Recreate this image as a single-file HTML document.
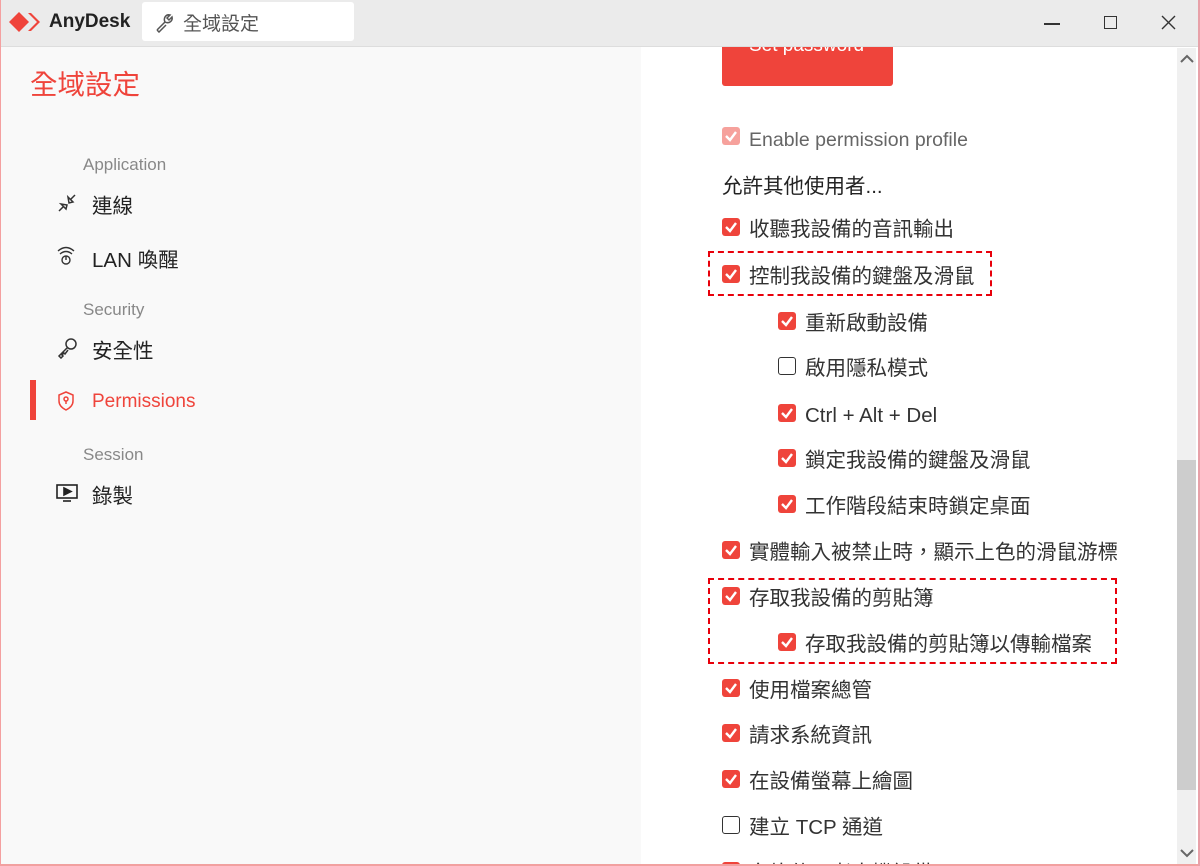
<!DOCTYPE html>
<html style="overflow:hidden"><head><meta charset="utf-8"><style>
*{margin:0;padding:0;box-sizing:border-box}
html,body{width:1200px;height:866px;overflow:hidden}
body{background:#fff;font-family:"Liberation Sans","Noto Sans CJK TC",sans-serif;color:#222}
#w{position:relative;width:1200px;height:866px;overflow:hidden}
.a{position:absolute;white-space:nowrap}
.tb{left:0;top:0;width:1200px;height:47px;background:#ebebeb;border-bottom:1px solid #ddd}
.left{left:0;top:47px;width:641px;height:819px;background:#f9f9f9}
.cb{position:absolute;width:18px;height:18px;border-radius:3px;background:#ef443b}
.cb svg{position:absolute;left:2px;top:3px}
.cbe{position:absolute;width:18px;height:18px;border-radius:3px;border:1.6px solid #333;background:#fff}
.t{font-size:20.5px;color:#333;line-height:24px}
.nav{font-size:20.5px;color:#222}
.sec{font-size:17px;color:#888}
</style></head><body><div id="w">
<div class="a tb"></div>
<svg class="a" style="left:9px;top:11px" width="36" height="22" viewBox="0 0 36 22"><path d="M0 11 L10 1 L20 11 L10 21Z" fill="#ef443b"/><path d="M19 2 L28 11 L19 20 L22 20 L31 11 L22 2Z" fill="#ef443b"/></svg>
<div class="a" style="left:49px;top:11px;font-size:19px;font-weight:bold;color:#222">AnyDesk</div>
<div class="a" style="left:142px;top:2px;width:212px;height:39px;background:#fff;border-radius:3px"></div>
<svg class="a" style="left:154px;top:11px" width="22" height="22" viewBox="0 0 22 22"><path d="M3 19 L11 11 M11 11 C9 7 12 3 16 4 L13 7 L15 9 L18 6 C19 10 15 13 11 11 M3 19 L5 21 L12 14" fill="none" stroke="#555" stroke-width="1.5"/></svg>
<div class="a" style="left:183px;top:9px;font-size:19px;color:#555">全域設定</div>
<div class="a" style="left:1044px;top:23px;width:16px;height:1.5px;background:#333"></div>
<div class="a" style="left:1104px;top:16px;width:13px;height:13px;border:1.5px solid #333"></div>
<svg class="a" style="left:1161px;top:15px" width="15" height="15"><path d="M1 1L14 14M14 1L1 14" stroke="#333" stroke-width="1.4"/></svg>
<div class="a left"></div>
<div class="a" style="left:30px;top:62px;font-size:27.5px;color:#ef443b">全域設定</div>
<div class="a sec" style="left:83px;top:155px">Application</div>
<svg class="a" style="left:57px;top:193px" width="20" height="20" viewBox="0 0 20 20" fill="none" stroke="#333" stroke-width="1.5"><path d="M2 18L7 13M13 7L18 2M4 11L9 16L10 12ZM11 4L16 9L12 10Z"/></svg>
<div class="a nav" style="left:92px;top:189px">連線</div>
<svg class="a" style="left:56px;top:245px" width="20" height="20" viewBox="0 0 20 20" fill="none" stroke="#333" stroke-width="1.4"><path d="M2 6Q10 -1 18 6M4 9Q10 4 16 9"/><circle cx="10" cy="15" r="4"/><path d="M10 11V15"/></svg>
<div class="a nav" style="left:92px;top:243px">LAN 喚醒</div>
<div class="a sec" style="left:83px;top:300px">Security</div>
<svg class="a" style="left:56px;top:337px" width="22" height="22" viewBox="0 0 22 22" fill="none" stroke="#333" stroke-width="1.5"><circle cx="15" cy="7" r="5"/><path d="M11 11L3 19L5 21L7 19L6 18L8 16L9 17L12 13"/></svg>
<div class="a nav" style="left:92px;top:334px">安全性</div>
<div class="a" style="left:30px;top:380px;width:6px;height:40px;background:#ef443b"></div>
<svg class="a" style="left:57px;top:391px" width="18" height="20" viewBox="0 0 18 20" fill="none" stroke="#ef443b" stroke-width="1.5"><path d="M9 1L16 4V10C16 14 13 17 9 19C5 17 2 14 2 10V4Z"/><circle cx="9" cy="8" r="2"/><path d="M9 10V13"/></svg>
<div class="a" style="left:92px;top:391px;font-size:19px;color:#ef443b">Permissions</div>
<div class="a sec" style="left:83px;top:445px">Session</div>
<svg class="a" style="left:56px;top:483px" width="22" height="20" viewBox="0 0 22 20" fill="none" stroke="#222" stroke-width="1.6"><rect x="1" y="2" width="20" height="13"/><path d="M8 5L15 8.5L8 12Z" fill="#222"/><path d="M7 18H15"/></svg>
<div class="a nav" style="left:92px;top:479px">錄製</div>

<div class="a" style="left:722px;top:47px;width:171px;height:39px;background:#ef443b;border-radius:0 0 3px 3px;overflow:hidden"><div style="position:absolute;left:27px;top:-12px;font-size:19px;color:#fff">Set password</div></div>
<div class="a" style="left:1177px;top:48px;width:19px;height:816px;background:#f0f0f0"></div>
<div class="a" style="left:1177px;top:460px;width:19px;height:330px;background:#cdcdcd"></div>
<svg class="a" style="left:1180px;top:54px" width="14" height="10"><path d="M1 8L7 2L13 8" fill="none" stroke="#666" stroke-width="2"/></svg>
<svg class="a" style="left:1180px;top:848px" width="14" height="10"><path d="M1 2L7 8L13 2" fill="none" stroke="#666" stroke-width="2"/></svg>

<div class="cb" style="left:722px;top:127px;background:#f6a19c"><svg width="14" height="12"><path d="M2 6L6 10L12 2" fill="none" stroke="#fff" stroke-width="2.4"/></svg></div>
<div class="a t" style="left:749px;top:128px;color:#666;font-size:19.5px">Enable permission profile</div>
<div class="a t" style="left:722px;top:175px;color:#222">允許其他使用者...</div>

<div id="list"></div>
<script>
var items=[[722,228,1,"收聽我設備的音訊輸出"],[722,275,1,"控制我設備的鍵盤及滑鼠"],[778,322,1,"重新啟動設備"],[778,367,0,"啟用隱私模式"],[778,414,1,"Ctrl + Alt + Del"],[778,459,1,"鎖定我設備的鍵盤及滑鼠"],[778,505,1,"工作階段結束時鎖定桌面"],[722,551,1,"實體輸入被禁止時，顯示上色的滑鼠游標"],[722,597,1,"存取我設備的剪貼簿"],[778,643,1,"存取我設備的剪貼簿以傳輸檔案"],[722,689,1,"使用檔案總管"],[722,734,1,"請求系統資訊"],[722,780,1,"在設備螢幕上繪圖"],[722,826,0,"建立 TCP 通道"],[722,872,1,"允許使用者本機設備"]];
var h="";items.forEach(function(i){var y=i[1];h+=i[2]?'<div class="cb" style="left:'+i[0]+'px;top:'+(y-10)+'px"><svg width="14" height="12"><path d="M2 6L6 10L12 2" fill="none" stroke="#fff" stroke-width="2.4"/></svg></div>':'<div class="cbe" style="left:'+i[0]+'px;top:'+(y-10)+'px"></div>';h+='<div class="a t" style="left:'+(i[0]+27)+'px;top:'+(y-10)+'px">'+i[3]+'</div>';});
document.getElementById("list").innerHTML=h;
</script>
<div class="a" style="left:708px;top:251px;width:284px;height:45px;border:2.5px dashed #e8000b"></div>
<div class="a" style="left:708px;top:578px;width:409px;height:86px;border:2.5px dashed #e8000b"></div>
<div class="a" style="left:0;top:864px;width:1200px;height:2px;background:#f2a0a0"></div>
<div class="a" style="left:1198px;top:0;width:2px;height:866px;background:#e8a0a8"></div>
<div class="a" style="left:0;top:0;width:1px;height:866px;background:#f4a0a0"></div>
</div></body></html>
